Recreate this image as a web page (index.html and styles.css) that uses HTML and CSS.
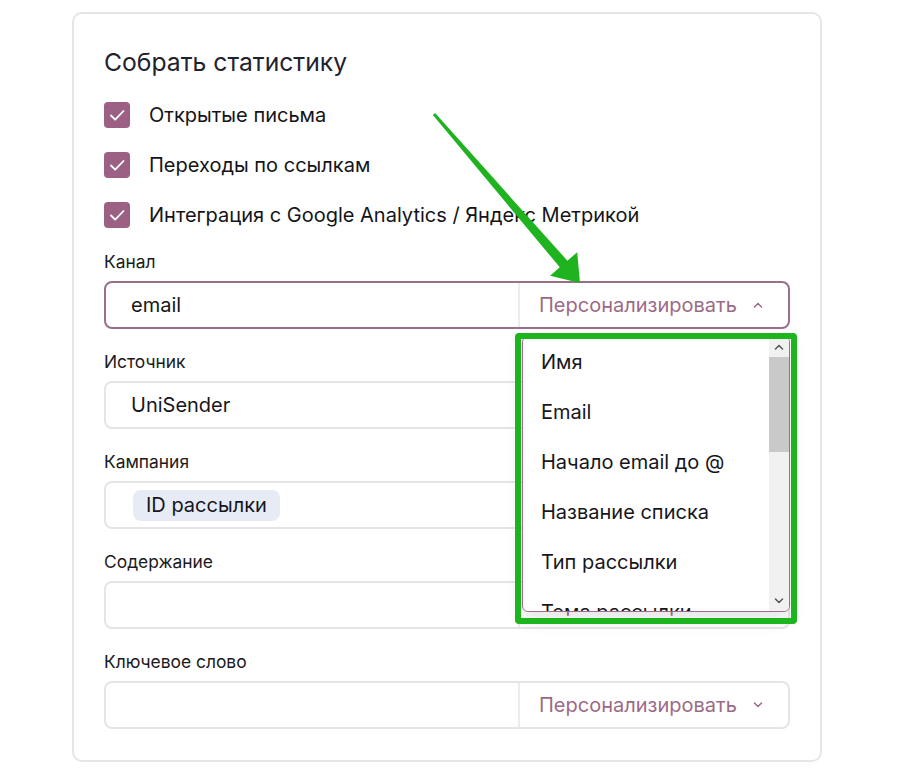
FILE: index.html
```html
<!DOCTYPE html>
<html lang="ru">
<head>
<meta charset="utf-8">
<title>Собрать статистику</title>
<link rel="stylesheet" href="styles.css">
</head>
<body>
<div class="page">
  <section class="card">
    <h2 class="title">Собрать статистику</h2>
    <ul class="checks">
      <li class="check"><span class="box"><svg viewBox="0 0 26 26" width="26" height="26"><path d="M7 13.5l4.2 4.2L19.5 9" fill="none" stroke="#fff" stroke-width="1.8" stroke-linecap="round" stroke-linejoin="round"/></svg></span>Открытые письма</li>
      <li class="check"><span class="box"><svg viewBox="0 0 26 26" width="26" height="26"><path d="M7 13.5l4.2 4.2L19.5 9" fill="none" stroke="#fff" stroke-width="1.8" stroke-linecap="round" stroke-linejoin="round"/></svg></span>Переходы по ссылкам</li>
      <li class="check"><span class="box"><svg viewBox="0 0 26 26" width="26" height="26"><path d="M7 13.5l4.2 4.2L19.5 9" fill="none" stroke="#fff" stroke-width="1.8" stroke-linecap="round" stroke-linejoin="round"/></svg></span>Интеграция с Google Analytics / Яндекс Метрикой</li>
    </ul>
    <div class="fields">
      <div class="field">
        <div class="label">Канал</div>
        <div class="control active">
          <div class="value">email</div>
          <div class="personal">Персонализировать <svg class="chev" viewBox="0 0 10 6" width="10" height="6"><path d="M1.5 5L5 1.5 8.5 5" fill="none" stroke="currentColor" stroke-width="1.5" stroke-linecap="round" stroke-linejoin="round"/></svg></div>
          <div class="dropdown">
            <ul class="options">
              <li>Имя</li>
              <li>Email</li>
              <li>Начало email до @</li>
              <li>Название списка</li>
              <li>Тип рассылки</li>
              <li>Тема рассылки</li>
            </ul>
            <div class="scrollbar">
              <svg class="sb-arrow" viewBox="0 0 10 6" width="10" height="6"><path d="M1.5 5L5 1.5 8.5 5" fill="none" stroke="#555" stroke-width="1.5" stroke-linecap="round" stroke-linejoin="round"/></svg>
              <div class="track"><div class="thumb"></div></div>
              <svg class="sb-arrow" viewBox="0 0 10 6" width="10" height="6"><path d="M1.5 1L5 4.5 8.5 1" fill="none" stroke="#555" stroke-width="1.5" stroke-linecap="round" stroke-linejoin="round"/></svg>
            </div>
          </div>
        </div>
      </div>
      <div class="field">
        <div class="label">Источник</div>
        <div class="control">
          <div class="value">UniSender</div>
          <div class="personal">Персонализировать <svg class="chev" viewBox="0 0 10 6" width="10" height="6"><path d="M1.5 1L5 4.5 8.5 1" fill="none" stroke="currentColor" stroke-width="1.5" stroke-linecap="round" stroke-linejoin="round"/></svg></div>
        </div>
      </div>
      <div class="field">
        <div class="label">Кампания</div>
        <div class="control">
          <div class="value"><span class="tag">ID рассылки</span></div>
          <div class="personal">Персонализировать <svg class="chev" viewBox="0 0 10 6" width="10" height="6"><path d="M1.5 1L5 4.5 8.5 1" fill="none" stroke="currentColor" stroke-width="1.5" stroke-linecap="round" stroke-linejoin="round"/></svg></div>
        </div>
      </div>
      <div class="field">
        <div class="label">Содержание</div>
        <div class="control">
          <div class="value"></div>
          <div class="personal">Персонализировать <svg class="chev" viewBox="0 0 10 6" width="10" height="6"><path d="M1.5 1L5 4.5 8.5 1" fill="none" stroke="currentColor" stroke-width="1.5" stroke-linecap="round" stroke-linejoin="round"/></svg></div>
        </div>
      </div>
      <div class="field">
        <div class="label">Ключевое слово</div>
        <div class="control">
          <div class="value"></div>
          <div class="personal">Персонализировать <svg class="chev" viewBox="0 0 10 6" width="10" height="6"><path d="M1.5 1L5 4.5 8.5 1" fill="none" stroke="currentColor" stroke-width="1.5" stroke-linecap="round" stroke-linejoin="round"/></svg></div>
        </div>
      </div>
    </div>
  </section>
  <div class="highlight"></div>
  <svg class="arrow" viewBox="0 0 897 778" width="897" height="778">
    <polygon points="435.1,113 567.4,260.7 577.2,252.2 580,283 550,275.8 559.8,267.3 432.9,115" fill="#1fb31f"/>
  </svg>
</div>
</body>
</html>
```

FILE: styles.css
```css
* { box-sizing: border-box; }
html, body { margin: 0; padding: 0; background: #fff; }
body {
  font-family: Inter, "Noto Sans", "Liberation Sans", sans-serif;
  color: #16161c;
}
.page {
  position: relative;
  width: 897px;
  height: 778px;
  padding: 12px 0 0 72px;
}
.card {
  width: 750px;
  height: 750px;
  border: 2px solid #e6e6e8;
  border-radius: 10px;
  padding: 32px 30px 0 30px;
}
.title {
  margin: 0;
  font-size: 24.7px;
  line-height: 32px;
  font-weight: 400;
  color: #22222e;
}
.checks {
  list-style: none;
  margin: 12px 0 10px;
  padding: 0;
}
.check {
  display: flex;
  align-items: center;
  height: 50px;
  font-size: 20px;
  color: #141418;
}
.box {
  width: 26px;
  height: 26px;
  border-radius: 4px;
  background: #9b6084;
  margin-right: 19px;
  display: flex;
}
.fields {
  display: flex;
  flex-direction: column;
  gap: 21px;
}
.label {
  font-size: 17.4px;
  line-height: 24px;
  margin-bottom: 7px;
  color: #1a1a20;
}
.control {
  position: relative;
  display: grid;
  grid-template-columns: 1fr 270px;
  height: 48px;
  border: 2px solid #e5e5e8;
  border-radius: 8px;
}
.control.active { border-color: #9b6e89; }
.value {
  display: flex;
  align-items: center;
  padding-left: 25px;
  font-size: 20px;
  color: #16161c;
}
.personal {
  display: flex;
  align-items: center;
  justify-content: space-between;
  padding: 0 25px 0 19px;
  border-left: 2px solid #ececef;
  font-size: 20px;
  color: #9b6a88;
}
.chev { color: #9b6a88; }
.tag {
  margin-left: 2px;
  background: #e6ebf6;
  border-radius: 8px;
  padding: 0 13px;
  height: 31px;
  line-height: 31px;
  font-size: 20px;
}
.dropdown {
  position: absolute;
  top: calc(100% + 9px);
  right: -2px;
  width: 268px;
  height: 276px;
  display: flex;
  background: #fff;
  border: 1px solid #9b6e89;
  border-radius: 6px;
  box-shadow: 0 8px 18px rgba(0, 0, 0, 0.10);
  overflow: hidden;
  z-index: 2;
}
.options {
  flex: 1;
  list-style: none;
  margin: 0;
  padding: 0;
  overflow: hidden;
}
.options li {
  height: 50px;
  line-height: 50px;
  padding-left: 18px;
  font-size: 20px;
  color: #16161c;
  white-space: nowrap;
}
.scrollbar {
  width: 20px;
  background: #f1f1f1;
  display: flex;
  flex-direction: column;
  align-items: center;
}
.sb-arrow { margin: 7px 0; flex: none; }
.track {
  flex: 1;
  width: 100%;
}
.thumb {
  width: 100%;
  height: 95px;
  background: #c9c9c9;
}
.highlight {
  position: absolute;
  left: 515px;
  top: 333px;
  width: 282px;
  height: 291px;
  border: 6px solid #1db51d;
  border-radius: 4px;
  z-index: 3;
  pointer-events: none;
}
.arrow {
  position: absolute;
  left: 0;
  top: 0;
  z-index: 4;
  pointer-events: none;
}
```
